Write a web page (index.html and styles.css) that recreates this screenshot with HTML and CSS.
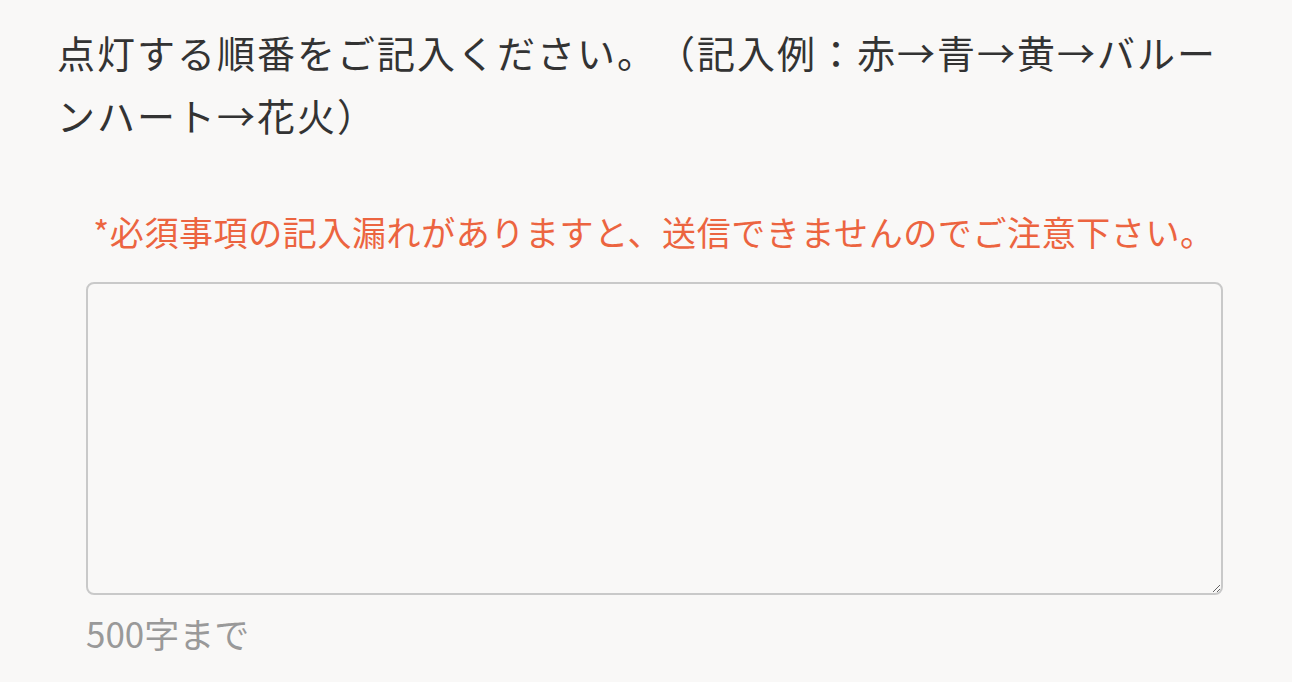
FILE: index.html
```html
<!DOCTYPE html>
<html lang="ja">
<head>
<meta charset="utf-8">
<link rel="stylesheet" href="styles.css">
</head>
<body>
<div class="page">
  <h2 class="title">点灯する順番をご記入ください。（記入例：赤→青→黄→バルーンハート→花火）</h2>
  <div class="field">
    <p class="note">*必須事項の記入漏れがありますと、送信できませんのでご注意下さい。</p>
    <textarea class="box"></textarea>
    <div class="limit">500字まで</div>
  </div>
</div>
</body>
</html>
```
FILE: styles.css
```css
html, body {
  margin: 0;
  padding: 0;
  background: #f9f8f7;
}
body {
  font-family: "Noto Sans CJK JP", "Noto Sans", sans-serif;
  text-spacing-trim: space-all;
}
.page {
  padding: 20px 70px 0 57px;
}
.title {
  margin: 0;
  font-size: 38px;
  letter-spacing: 2px;
  font-weight: normal;
  line-height: 63px;
  color: #333;
}
.field {
  padding: 0 0 0 29px;
}
.note {
  margin: 62px 0 0 0;
  text-align: center;
  color: #ec6440;
  font-size: 34px;
  letter-spacing: 0.6px;
  line-height: 48px;
}
.box {
  display: block;
  box-sizing: border-box;
  width: 1137px;
  height: 313px;
  margin-top: 26px;
  border: 2px solid #c9c9c9;
  border-radius: 8px;
  background: #f9f8f7;
  font-family: inherit;
}
.limit {
  margin-top: 15px;
  color: #999;
  font-size: 35px;
  line-height: 46px;
}
```
